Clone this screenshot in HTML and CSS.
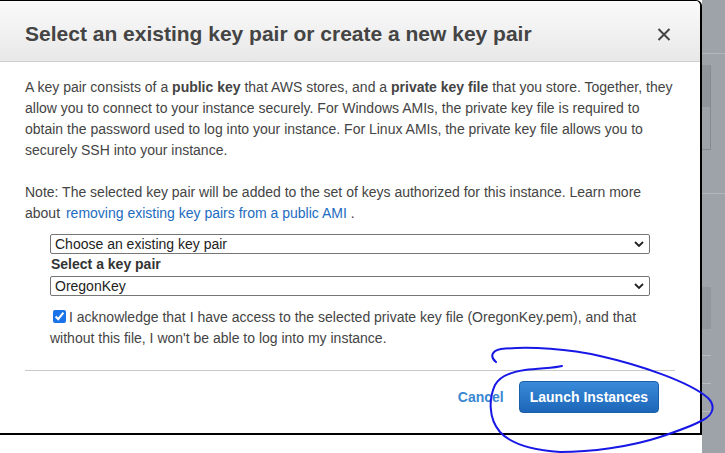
FILE: index.html
```html
<!DOCTYPE html>
<html lang="en">
<head>
<meta charset="utf-8">
<title>Select key pair</title>
<link rel="stylesheet" href="styles.css">
</head>
<body>
<div class="page">
  <div class="modal">
    <div class="modal-header">
      <h2 class="modal-title">Select an existing key pair or create a new key pair</h2>
      <svg class="close" width="14" height="13" viewBox="0 0 14 13" aria-label="Close">
        <path d="M1.5 1 L12.5 12 M12.5 1 L1.5 12" stroke="#444" stroke-width="2" fill="none"/>
      </svg>
    </div>
    <div class="modal-body">
      <p class="text">A key pair consists of a <b>public key</b> that AWS stores, and a <b>private key file</b> that you store. Together, they allow you to connect to your instance securely. For Windows AMIs, the private key file is required to obtain the password used to log into your instance. For Linux AMIs, the private key file allows you to securely SSH into your instance.</p>
      <p class="text note">Note: The selected key pair will be added to the set of keys authorized for this instance. Learn more about <a class="link" href="#">removing existing key pairs from a public AMI</a> .</p>
      <div class="form">
        <div class="select">
          <select class="select-input"><option>Choose an existing key pair</option></select>
          <svg class="chev" width="10" height="6" viewBox="0 0 10 6"><path d="M1 1 L5 5 L9 1" stroke="#222" stroke-width="1.8" fill="none"/></svg>
        </div>
        <div class="label">Select a key pair</div>
        <div class="select">
          <select class="select-input"><option>OregonKey</option></select>
          <svg class="chev" width="10" height="6" viewBox="0 0 10 6"><path d="M1 1 L5 5 L9 1" stroke="#222" stroke-width="1.8" fill="none"/></svg>
        </div>
        <label class="ack"><input class="check" type="checkbox" checked>I acknowledge that I have access to the selected private key file (OregonKey.pem), and that without this file, I won't be able to log into my instance.</label>
      </div>
      <div class="divider"></div>
      <div class="footer">
        <a class="cancel" href="#">Cancel</a>
        <button class="launch" type="button">Launch Instances</button>
      </div>
    </div>
  </div>
  <div class="backdrop">
    <div class="bd-line bd-line-1"></div>
    <div class="bd-box"><div class="bd-box-top"></div></div>
    <div class="bd-line bd-line-2"></div>
    <div class="bd-block"></div>
    <div class="bd-short bd-short-1"></div>
    <div class="bd-short"></div>
    <div class="bd-short"></div>
  </div>
</div>
<svg class="scribble" width="725" height="453" viewBox="0 0 725 453">
  <path d="M496,362 C490,357 491,351 501,349 C530,346 570,349 600,356 C640,365 690,382 708,398 C716,406 713,415 703,420 C690,427 675,432 660,437 C630,447 590,452 560,452 C530,450 510,443 500,432 C488,418 489,398 495,385 C500,376 510,372 525,370 C540,368 555,368 562,366" stroke="#1818e6" stroke-width="2" fill="none" stroke-linecap="round"/>
</svg>
</body>
</html>
```

FILE: styles.css
```css
* { box-sizing: border-box; }
html, body { margin: 0; padding: 0; background: #fff; }
body {
  font-family: "Liberation Sans", Arial, sans-serif;
  font-size: 14px;
  color: #444;
  width: 725px;
  height: 453px;
  overflow: hidden;
  position: relative;
}
.page {
  display: flex;
  align-items: flex-start;
  height: 453px;
}
.modal {
  width: 702px;
  flex: none;
  background: #fff;
  border-top: 1px solid #000;
  border-right: 2px solid #000;
  border-bottom: 2px solid #000;
  border-top-right-radius: 6px;
}
.modal-header {
  display: flex;
  justify-content: space-between;
  align-items: center;
  height: 61px;
  padding: 0 29px 0 25px;
  background: linear-gradient(#fafafa, #e8e8e8);
  border-bottom: 1px solid #cfcfcf;
  border-top-right-radius: 5px;
}
.modal-title {
  margin: 6px 0 0;
  font-size: 21px;
  line-height: 28px;
  font-weight: bold;
  color: #444;
}
.close { margin-top: 6px; }
.modal-body {
  padding: 15px 25px 20px;
}
.text {
  margin: 0 0 21px;
  line-height: 21px;
}
.text b { font-weight: bold; color: #444; }
.note { margin-bottom: 10px; }
.link { color: #1c6cc0; text-decoration: none; margin-left: 2px; }
.form {
  margin-left: 25px;
  width: 600px;
}
.select {
  display: flex;
  align-items: center;
  height: 20px;
  border: 1px solid #767676;
  border-radius: 2px;
  background: #fff;
  padding-right: 5px;
}
.select-input {
  appearance: none;
  -webkit-appearance: none;
  flex: 1;
  border: none;
  background: transparent;
  font-family: "Liberation Sans", Arial, sans-serif;
  font-size: 14px;
  color: #222;
  padding: 0 0 0 4px;
  height: 18px;
  line-height: 18px;
  outline: none;
}
.chev { flex: none; }
.label {
  font-weight: bold;
  line-height: 21px;
  margin-bottom: 1px;
  padding-left: 1px;
  color: #333;
}
.ack {
  display: block;
  margin-top: 11px;
  line-height: 21px;
  color: #444;
}
.check {
  width: 13px;
  height: 13px;
  margin: 0 3px 0 3px;
  vertical-align: -1px;
  accent-color: #1a73e8;
}
.divider {
  height: 1px;
  background: #c8c8c8;
  margin-top: 21px;
}
.footer {
  display: flex;
  justify-content: flex-end;
  align-items: center;
  gap: 15px;
  padding-top: 10px;
  padding-right: 16px;
}
.cancel {
  color: #3a87d2;
  font-weight: bold;
  text-decoration: none;
}
.launch {
  height: 32px;
  padding: 0 10px;
  border: 1px solid #1b5fa8;
  border-radius: 4px;
  background: linear-gradient(#3a8ada, #1c66b8);
  color: #fff;
  font-family: "Liberation Sans", Arial, sans-serif;
  font-size: 14px;
  font-weight: bold;
}
.backdrop {
  flex: 1;
  height: 453px;
  background: #9da3a9;
  display: flex;
  flex-direction: column;
}
.bd-line { height: 1px; background: #b2b7bc; }
.bd-line-1 { margin-top: 53px; }
.bd-box {
  margin-top: 11px;
  width: 9px;
  height: 85px;
  border-right: 1px solid #858b91;
  border-bottom: 1px solid #858b91;
}
.bd-box-top { height: 42px; background: #8f959b; }
.bd-line-2 { margin-top: 43px; }
.bd-block {
  margin-top: 93px;
  width: 9px;
  height: 42px;
  background: #92979d;
}
.bd-short {
  width: 9px;
  height: 1px;
  background: #b7bbbf;
  margin-top: 27px;
}
.bd-short-1 { margin-top: 26px; }
.scribble {
  position: absolute;
  left: 0;
  top: 0;
  pointer-events: none;
}
```
